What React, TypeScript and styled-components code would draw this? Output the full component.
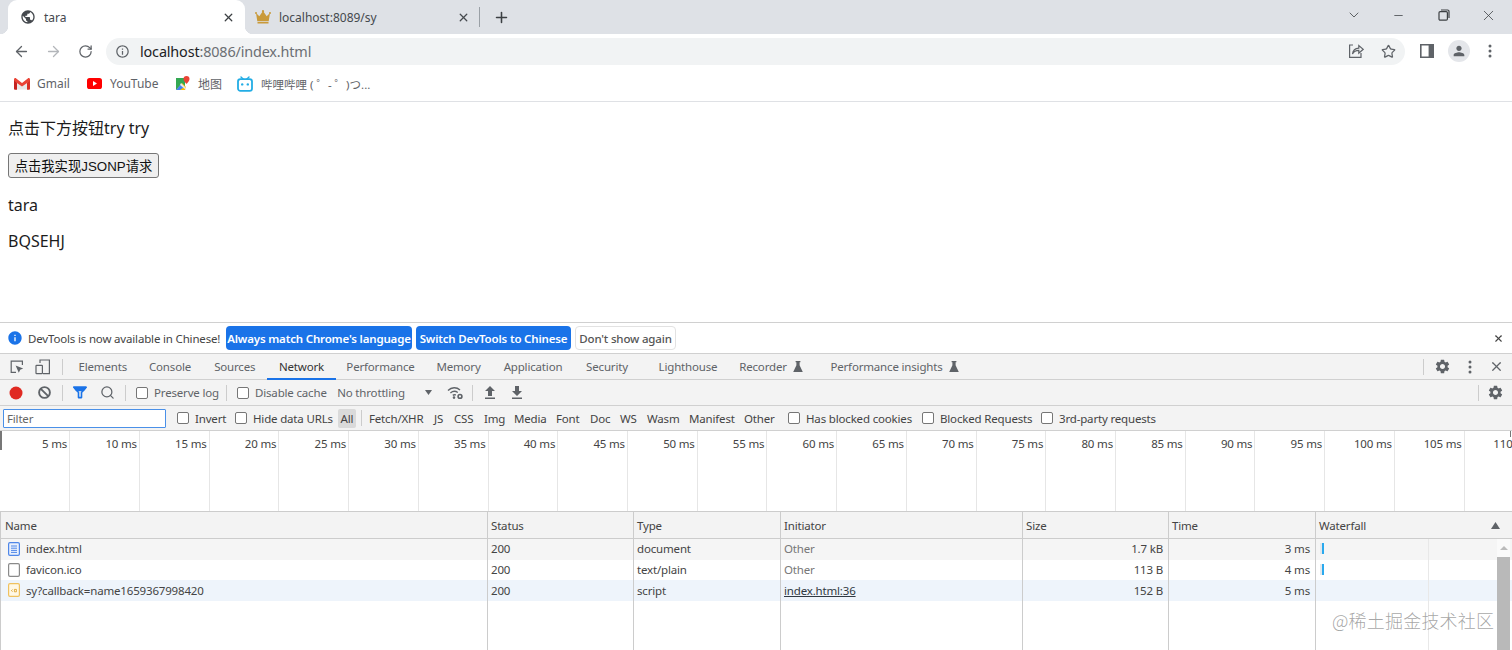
import React from "react";
import styled, { createGlobalStyle } from "styled-components";
import { ArrowLeft, ArrowRight, RotateCw, Star, X, Plus, Minus, ChevronDown, Search } from "lucide-react";
import { MdPublic, MdInfoOutline, MdInfo, MdPerson, MdSettings } from "react-icons/md";

const UI = `"Noto Sans", "Noto Sans CJK SC", sans-serif`;
const Global = createGlobalStyle`
  html, body { margin: 0; padding: 0; background: #fff; }
  #root { width: 1512px; height: 650px; overflow: hidden; }
  * { box-sizing: border-box; }
`;

const Shell = styled.div`
  width: 1512px; height: 650px; display: flex; flex-direction: column; overflow: hidden;
  position: relative; font-family: ${UI}; color: #333;
`;

/* ---------- browser chrome ---------- */
const TabStrip = styled.div`
  height: 34px; flex: none; background: #dee1e6; display: flex; align-items: stretch; padding-left: 8px;
`;
const ActiveTab = styled.div`
  width: 237px; background: #fff; border-radius: 9px 9px 0 0; display: flex; align-items: center;
  padding: 0 10px 0 12px; position: relative; font-size: 12px; color: #45494e;
  &::before, &::after { content: ""; position: absolute; bottom: 0; width: 8px; height: 8px; }
  &::before { left: -8px; background: radial-gradient(circle at 0 0, #dee1e6 8px, #fff 8.5px); }
  &::after { right: -8px; background: radial-gradient(circle at 100% 0, #dee1e6 8px, #fff 8.5px); }
`;
const InactiveTab = styled.div`
  width: 234px; display: flex; align-items: center; padding: 0 9px 0 10px; font-size: 12px; color: #45494e;
`;
const TabTitle = styled.span`
  flex: 1; margin-left: 8px; white-space: nowrap;
`;
const TabDivider = styled.div`
  width: 1px; height: 20px; background: #9aa0a6; align-self: center;
`;
const NewTab = styled.div`
  width: 42px; display: flex; align-items: center; justify-content: center; color: #3c4043;
`;
const WindowControls = styled.div`
  margin-left: auto; display: flex; align-items: center; color: #3c4043; padding: 0 1px 4px 0;
`;
const WinButton = styled.div<{ $w: number }>`
  width: ${(p) => p.$w}px; display: flex; justify-content: center; align-items: center;
`;
const Toolbar = styled.div`
  height: 34px; flex: none; background: #fff; display: flex; align-items: center; padding-left: 5px;
`;
const NavButton = styled.div<{ $c?: string }>`
  width: 32px; height: 32px; display: flex; align-items: center; justify-content: center; color: ${(p) => p.$c || "#5f6368"};
`;
const Omnibox = styled.div`
  margin-left: 5px; width: 1299px; height: 27px; border-radius: 14px; background: #f1f3f4; display: flex; align-items: center;
  padding: 0 1px 0 9px; color: #5f6368;
`;
const Url = styled.div`
  margin-left: 10px; font-size: 14.4px; letter-spacing: -0.15px; color: #6b6f73; white-space: nowrap; flex: 1;
  b { font-weight: 400; color: #202124; }
`;
const OmniAction = styled.div`
  width: 32px; display: flex; justify-content: center; color: #5f6368;
`;
const AvatarBadge = styled.div`
  width: 22px; height: 22px; border-radius: 50%; background: #e4e6ea; display: flex; align-items: center; justify-content: center; color: #5f6368;
`;
const Bookmarks = styled.div`
  height: 34px; flex: none; background: #fff; border-bottom: 1px solid #dfe1e5; display: flex; align-items: center;
  padding: 0 0 2px 14px; font-size: 12px; color: #5f6368;
`;
const Bookmark = styled.div<{ $w: number; $gap?: number; $fs?: number }>`
  width: ${(p) => p.$w}px; display: flex; align-items: center; gap: ${(p) => p.$gap || 8}px; white-space: nowrap; flex: none;
  font-size: ${(p) => p.$fs || 12}px;
`;

/* ---------- page ---------- */
const Page = styled.div`
  height: 220px; flex: none; background: #fff; padding: 15px 8px 0; font-family: ${UI};
  font-size: 16px; color: #1c1c1c;
`;
const Para = styled.p<{ $mt: number }>`
  margin: ${(p) => p.$mt}px 0 0; line-height: 22px; height: 22px;
`;
const PageButton = styled.button`
  display: block; margin: 14px 0 0; height: 25px; width: 151px; padding: 0; border: 1px solid #767676; border-radius: 3px;
  background: #efefef; font: 13.33px "Liberation Sans", "Noto Sans CJK SC", sans-serif; color: #111;
`;

/* ---------- devtools ---------- */
const DevTools = styled.div`
  flex: 1; min-height: 0; display: flex; flex-direction: column; font-size: 11.5px; letter-spacing: -0.17px;
`;
const InfoBar = styled.div`
  height: 32px; flex: none; background: #fff; border-top: 1px solid #d0d0d0; border-bottom: 1px solid #d0d0d0;
  display: flex; align-items: center; padding-left: 7px; color: #444;
`;
const InfoText = styled.span`
  margin-left: 5px; width: 198px; white-space: nowrap;
`;
const BlueButton = styled.div<{ $w: number }>`
  width: ${(p) => p.$w}px; height: 24px; margin-right: 4px; border-radius: 4px; background: #1a73e8; color: #fff;
  font-weight: 600; display: flex; align-items: center; justify-content: center; white-space: nowrap;
`;
const PlainButton = styled.div`
  width: 101px; height: 24px; border-radius: 4px; border: 1px solid #e2e2e2; color: #555;
  font-weight: 500; display: flex; align-items: center; justify-content: center; white-space: nowrap;
`;
const InfoClose = styled.div`
  margin-left: auto; width: 28px; display: flex; justify-content: center; color: #444;
`;
const PanelTabs = styled.div`
  height: 26px; flex: none; background: #f3f3f3; border-bottom: 1px solid #d0d0d0; display: flex; align-items: stretch;
  color: #5f6368;
`;
const Slot = styled.div<{ $w: number; $ml?: number; $c?: string }>`
  width: ${(p) => p.$w}px; margin-left: ${(p) => p.$ml || 0}px; flex: none; display: flex; align-items: center; justify-content: center;
  color: ${(p) => p.$c || "#5f6368"};
`;
const Sep = styled.div<{ $ml?: number; $mr?: number }>`
  width: 1px; height: 16px; background: #ccc; align-self: center; flex: none;
  margin-left: ${(p) => p.$ml || 0}px; margin-right: ${(p) => p.$mr || 0}px;
`;
const PushSep = styled(Sep)`
  margin-left: auto;
`;
const PanelTab = styled.div<{ $w: number; $ml?: number; $active?: boolean }>`
  width: ${(p) => p.$w}px; margin-left: ${(p) => p.$ml || 0}px; flex: none; display: flex; align-items: center; justify-content: center; gap: 6px; white-space: nowrap;
  color: ${(p) => (p.$active ? "#333" : "#5f6368")};
  border-bottom: 2px solid ${(p) => (p.$active ? "#1a73e8" : "transparent")};
  margin-bottom: -1px;
`;
const NetBar = styled.div`
  height: 26px; flex: none; background: #f3f3f3; border-bottom: 1px solid #d0d0d0; display: flex; align-items: center;
  color: #5f6368;
`;
const Throttle = styled.span`
  white-space: nowrap;
`;
const FilterBar = styled.div`
  height: 25px; flex: none; background: #f3f3f3; border-bottom: 1px solid #d0d0d0; display: flex; align-items: center;
  color: #444; padding-left: 3px;
`;
const FilterInput = styled.div`
  width: 163px; height: 19px; background: #fff; border: 1px solid #4a90e8; display: flex; align-items: center; padding-left: 3px;
  color: #666; flex: none; border-radius: 1px;
`;
const CheckRow = styled.label<{ $ml: number; $tw: number }>`
  margin-left: ${(p) => p.$ml}px; flex: none; display: flex; align-items: center; gap: 6px; white-space: nowrap;
  span { width: ${(p) => p.$tw}px; }
`;
const Box = styled.i`
  width: 12px; height: 12px; border: 1px solid #767676; border-radius: 2px; background: #fff; display: block; flex: none;
`;
const AllChip = styled.div`
  margin-left: 5px; width: 18px; height: 19px; background: #dadada; border-radius: 2px; display: flex; align-items: center; justify-content: center; flex: none;
`;
const Chip = styled.div<{ $w: number }>`
  width: ${(p) => p.$w}px; margin-right: 10px; flex: none; white-space: nowrap;
`;
const Timeline = styled.div`
  height: 81px; flex: none; background: #fff; border-bottom: 1px solid #ccc; display: flex; overflow: hidden; position: relative;
  color: #444; padding-left: 0.5px;
  &::before { content: ""; position: absolute; left: 0; top: 0; width: 2px; height: 19px; background: #777; }
  &::after { content: ""; position: absolute; right: 1px; top: 0; width: 1px; height: 6px; background: #777; }
`;
const Tick = styled.div`
  flex: none; width: 69.72px; height: 80px; border-right: 1px solid #e6e6e6; text-align: right; padding: 5px 2px 0 0; white-space: nowrap;
`;
const Table = styled.div`
  flex: 1; display: flex; flex-direction: column; background: #fff; color: #444; min-height: 0; border-left: 1px solid #ccc;
  position: relative;
`;
const COLS = "487px 146px 147px 242px 146px 147px 1fr";
const HeadRow = styled.div`
  height: 27px; flex: none; display: grid; grid-template-columns: ${COLS}; background: #f3f3f3; border-bottom: 1px solid #ccc;
`;
const HeadCell = styled.div`
  display: flex; align-items: center; justify-content: space-between; padding: 0 12px 0 3px; border-right: 1px solid #ccc; white-space: nowrap;
  &:first-child { padding-left: 4px; }
  &:last-child { border-right: none; }
`;
const BodyRow = styled.div<{ $bg: string; $grow?: boolean }>`
  height: 20.7px; flex: ${(p) => (p.$grow ? 1 : "none")}; display: grid; grid-template-columns: ${COLS}; background: ${(p) => p.$bg};
`;
const Cell = styled.div<{ $right?: boolean; $c?: string }>`
  display: flex; align-items: center; padding: 0 5px 1px 3px; border-right: 1px solid #ccc; white-space: nowrap;
  justify-content: ${(p) => (p.$right ? "flex-end" : "flex-start")};
  color: ${(p) => p.$c || "inherit"};
  &:last-child { border-right: none; }
`;
const NameCell = styled(Cell)`
  padding-left: 7px; gap: 6px;
`;
const LinkText = styled.span`
  text-decoration: underline; color: #303942;
`;
const WaterCell = styled.div`
  position: relative; overflow: hidden;
  &::after { content: ""; position: absolute; top: 0; bottom: 0; left: 112px; width: 1px; background: #e8e8e8; }
`;
const Bar = styled.div`
  position: absolute; left: 6px; top: 4px; width: 2px; height: 11px; background: #2aa9ee; box-shadow: -2px 0 0 #e3e8ec;
`;
const Scrollbar = styled.div`
  position: absolute; right: 2px; top: 27px; bottom: 0; width: 13px; background: #fafafa; display: flex; flex-direction: column;
`;
const ScrollArrow = styled.div`
  height: 18px; flex: none; display: flex; justify-content: center; padding-top: 7px;
  &::before { content: ""; width: 0; height: 0; border-left: 4px solid transparent; border-right: 4px solid transparent; border-bottom: 4px solid #bbb; }
`;
const ScrollThumb = styled.div`
  flex: 1; background: #b9b9b9;
`;
const Watermark = styled.div`
  position: absolute; left: 1332px; top: 609px; font-size: 18px; line-height: 22px; letter-spacing: 0.2px; color: rgba(90, 90, 90, 0.55);
  font-family: "Noto Sans CJK SC", sans-serif; white-space: nowrap; font-weight: 300;
`;

/* ---------- icons ---------- */
const Crown = () => (
  <svg width="16" height="14" viewBox="0 0 16 14"><path fill="#c99a3a" d="M1 3l3.3 3.2L8 1l3.7 5.2L15 3l-1.3 8.2H2.3zM2.5 12h11v1.5h-11z" /><circle cx="8" cy="1.2" r="1.1" fill="#c99a3a" /><circle cx="1" cy="3" r="1" fill="#c99a3a" /><circle cx="15" cy="3" r="1" fill="#c99a3a" /></svg>
);
const Share = () => (
  <svg width="16" height="16" viewBox="0 0 16 16" fill="none" stroke="#5f6368" strokeWidth="1.2"><path d="M5 2H1.6v12.4H13V10" /><path d="M4.5 11c.4-3.4 2.6-5.6 6.3-5.8V2.5L15.2 6.3l-4.4 3.8V7.4c-2.8 0-4.9 1-6.3 3.6z" /></svg>
);
const SidePanel = () => (
  <svg width="14" height="14" viewBox="0 0 14 14"><path fill="#5f6368" fillRule="evenodd" d="M0 0h14v14H0zM1.6 1.6v10.8h7V1.6z" /></svg>
);
const Dots = ({ c = "#5f6368" }: { c?: string }) => (
  <svg width="4" height="14" viewBox="0 0 4 14" fill={c}><circle cx="2" cy="2" r="1.5" /><circle cx="2" cy="7" r="1.5" /><circle cx="2" cy="12" r="1.5" /></svg>
);
const Restore = () => (
  <svg width="12" height="12" viewBox="0 0 12 12" fill="none" stroke="#3c4043" strokeWidth="1.2"><rect x="1" y="2.6" width="8.4" height="8.6" rx="1.2" /><path d="M3 1h6.6A1.4 1.4 0 0 1 11 2.4V9" /></svg>
);
const Gmail = () => (
  <svg width="16" height="12" viewBox="0 0 16 12"><path fill="#e8e8e8" d="M3 3l5 4 5-4v8.5H3z" /><path fill="#ea4335" d="M0 1.5C0 .3 1.3-.3 2.2.4L8 5 13.8.4C14.7-.3 16 .3 16 1.5V3L8 8.6 0 3z" /><path fill="#c5221f" d="M0 2.6l3 2.2v7H1a1 1 0 0 1-1-1z" /><path fill="#d93025" d="M16 2.6l-3 2.2v7h2a1 1 0 0 0 1-1z" /></svg>
);
const YouTube = () => (
  <svg width="15" height="11" viewBox="0 0 15 11"><rect width="15" height="11" rx="2.6" fill="#f00" /><path d="M6 3l4 2.5L6 8z" fill="#fff" /></svg>
);
const GMaps = () => (
  <svg width="15" height="15" viewBox="0 0 15 15"><path fill="#34a853" d="M1 2h9v9L1 14z" /><path fill="#fbbc04" d="M1 14l6-7 4 4-1 3z" /><path fill="#4285f4" d="M1 14l5-6 3 3-4 3z" /><path fill="#e8e8e8" d="M6 7l5 5v2l-6-5z" /><path fill="#ea4335" d="M11.5 0a3 3 0 0 1 3 3c0 2-3 5-3 5s-3-3-3-5a3 3 0 0 1 3-3z" /></svg>
);
const Bili = () => (
  <svg width="16" height="16" viewBox="0 0 16 16"><path d="M4 1l2.4 2.2M12 1L9.6 3.2" stroke="#23ade5" strokeWidth="1.4" strokeLinecap="round" /><rect x="1" y="3.2" width="14" height="11.6" rx="2.4" fill="none" stroke="#23ade5" strokeWidth="1.8" /><circle cx="5.2" cy="8.4" r="1.2" fill="#23ade5" /><circle cx="10.8" cy="8.4" r="1.2" fill="#23ade5" /></svg>
);
const Inspect = () => (
  <svg width="14" height="14" viewBox="0 0 14 14" fill="none" stroke="#5f6368" strokeWidth="1.2"><path d="M6 12.4H1.2V1.2h11.2V5" /><path d="M5.6 5.4l7.6 3-3 1.3-1.4 3.1z" fill="#5f6368" stroke="none" /></svg>
);
const Device = () => (
  <svg width="16" height="16" viewBox="0 0 16 16" fill="none" stroke="#5f6368" strokeWidth="1.2"><path d="M5 4V1h9.4v13.6H8" /><rect x="1" y="6.4" width="6.4" height="8.2" rx=".6" /></svg>
);
const Clear = () => (
  <svg width="13" height="13" viewBox="0 0 13 13" fill="none" stroke="#5f6368" strokeWidth="1.9"><circle cx="6.5" cy="6.5" r="5.4" /><path d="M2.8 2.8l7.4 7.4" /></svg>
);
const Funnel = () => (
  <svg width="14" height="13" viewBox="0 0 14 13" fill="none" stroke="#1a73e8" strokeWidth="1.6" strokeLinejoin="round"><path d="M1 1.2h12L8.5 6.6v5H5.5v-5z" /><path d="M1 1.2h12L10.4 4.4H3.6z" fill="#1a73e8" /></svg>
);
const WifiGear = () => (
  <svg width="17" height="14" viewBox="0 0 17 14" fill="none" stroke="#5f6368" strokeWidth="1.4"><path d="M1 4.4C4.6 1 9.6 1 13 4" /><path d="M3.4 7c2.4-2 5.2-2 7.4-.5" /><path d="M5.8 9.4c1-.8 2-.8 3-.4" /><circle cx="7" cy="11.6" r=".6" fill="#5f6368" /><circle cx="13" cy="10.4" r="1.9" strokeWidth="1.6" /></svg>
);
const Arrow = ({ down }: { down?: boolean }) => (
  <svg width="12" height="13" viewBox="0 0 12 13" fill="#5f6368">
    {down ? <path d="M4 0h4v5h3L6 10 1 5h3zM1 11.4h10V13H1z" /> : <path d="M6 0l5 5H8v5H4V5H1zM1 11.4h10V13H1z" />}
  </svg>
);
const Flask = () => (
  <svg width="10" height="11" viewBox="0 0 10 11" fill="#5f6368"><path d="M2.6 0h4.8v1.2H6.6v3L9.8 11H.2l3.2-6.8v-3h-.8z" /></svg>
);
const DocFile = () => (
  <svg width="12" height="14" viewBox="0 0 12 14"><rect x=".6" y=".6" width="10.8" height="12.8" rx="1.4" fill="#eaf1fd" stroke="#4f87e8" strokeWidth="1.2" /><path d="M3 4h6M3 6.2h6M3 8.4h6M3 10.4h6" stroke="#4f87e8" /></svg>
);
const BlankFile = () => (
  <svg width="12" height="14" viewBox="0 0 12 14"><rect x=".6" y=".6" width="10.8" height="12.8" rx="1.4" fill="#fff" stroke="#8a8a8a" strokeWidth="1.2" /></svg>
);
const ScriptFile = () => (
  <svg width="12" height="14" viewBox="0 0 12 14"><rect x=".6" y=".6" width="10.8" height="12.8" rx="1.4" fill="#fff8e6" stroke="#efc15f" strokeWidth="1.2" /><path d="M3.4 7.6l1.2-1M3.4 7.6l1.2 1M6.4 6.4h2v2.4h-2z" stroke="#d99a1c" strokeWidth=".8" fill="none" /></svg>
);

const tabs: [string, number][] = [
  ["Elements", 69.5], ["Console", 65], ["Sources", 64.5], ["Network", 69], ["Performance", 89], ["Memory", 67], ["Application", 82], ["Security", 66],
];
const chips: [string, number][] = [
  ["Fetch/XHR", 55], ["JS", 10], ["CSS", 20], ["Img", 20], ["Media", 32], ["Font", 24], ["Doc", 20], ["WS", 17], ["Wasm", 32], ["Manifest", 45], ["Other", 30],
];
const ticks = Array.from({ length: 22 }, (_, i) => `${(i + 1) * 5} ms`);
const emptyCells = [0, 1, 2, 3, 4, 5];

export default function App() {
  return (
    <Shell>
      <Global />
      <TabStrip>
        <ActiveTab>
          <MdPublic size={16} color="#45494e" />
          <TabTitle>tara</TabTitle>
          <X size={13} strokeWidth={2.4} color="#3c4043" />
        </ActiveTab>
        <InactiveTab>
          <Crown />
          <TabTitle>localhost:8089/sy</TabTitle>
          <X size={13} strokeWidth={2.4} color="#45494e" />
        </InactiveTab>
        <TabDivider />
        <NewTab><Plus size={17} strokeWidth={2.2} /></NewTab>
        <WindowControls>
          <WinButton $w={45}><ChevronDown size={16} strokeWidth={1.2} /></WinButton>
          <WinButton $w={45}><Minus size={13} strokeWidth={1.4} /></WinButton>
          <WinButton $w={45}><Restore /></WinButton>
          <WinButton $w={45}><X size={17} strokeWidth={1.1} /></WinButton>
        </WindowControls>
      </TabStrip>
      <Toolbar>
        <NavButton><ArrowLeft size={17} strokeWidth={1.8} /></NavButton>
        <NavButton $c="#b3b6ba"><ArrowRight size={17} strokeWidth={1.8} /></NavButton>
        <NavButton><RotateCw size={15} strokeWidth={2} /></NavButton>
        <Omnibox>
          <MdInfoOutline size={15} />
          <Url><b>localhost</b>:8086/index.html</Url>
          <OmniAction><Share /></OmniAction>
          <OmniAction><Star size={15} strokeWidth={2} /></OmniAction>
        </Omnibox>
        <Slot $w={32} $ml={6}><SidePanel /></Slot>
        <Slot $w={32}><AvatarBadge><MdPerson size={16} /></AvatarBadge></Slot>
        <Slot $w={30}><Dots /></Slot>
      </Toolbar>
      <Bookmarks>
        <Bookmark $w={73} $gap={7}><Gmail /><span>Gmail</span></Bookmark>
        <Bookmark $w={88}><YouTube /><span>YouTube</span></Bookmark>
        <Bookmark $w={62}><GMaps /><span>地图</span></Bookmark>
        <Bookmark $w={140} $fs={11.5}><Bili /><span>哔哩哔哩 ( ゜- ゜)つ...</span></Bookmark>
      </Bookmarks>

      <Page>
        <Para $mt={0}>点击下方按钮try try</Para>
        <PageButton>点击我实现JSONP请求</PageButton>
        <Para $mt={16}>tara</Para>
        <Para $mt={14}>BQSEHJ</Para>
      </Page>

      <DevTools>
        <InfoBar>
          <MdInfo size={16} color="#1a73e8" />
          <InfoText>DevTools is now available in Chinese!</InfoText>
          <BlueButton $w={186}>Always match Chrome's language</BlueButton>
          <BlueButton $w={155}>Switch DevTools to Chinese</BlueButton>
          <PlainButton>Don't show again</PlainButton>
          <InfoClose><X size={11} strokeWidth={2.4} /></InfoClose>
        </InfoBar>
        <PanelTabs>
          <Slot $w={20} $ml={7}><Inspect /></Slot>
          <Slot $w={24} $ml={4}><Device /></Slot>
          <Sep $ml={7} $mr={5} />
          {tabs.map(([t, w]) => (
            <PanelTab key={t} $w={w} $active={t === "Network"}>{t}</PanelTab>
          ))}
          <PanelTab $w={81} $ml={7.5}>Lighthouse</PanelTab>
          <PanelTab $w={85}>Recorder<Flask /></PanelTab>
          <PanelTab $w={162}>Performance insights<Flask /></PanelTab>
          <PushSep />
          <Slot $w={36}><MdSettings size={17} /></Slot>
          <Slot $w={20}><Dots /></Slot>
          <Slot $w={32}><X size={15} strokeWidth={2} /></Slot>
        </PanelTabs>
        <NetBar>
          <Slot $w={32}><svg width="14" height="14" viewBox="0 0 14 14"><circle cx="7" cy="7" r="6.5" fill="#e02a22" /></svg></Slot>
          <Slot $w={24}><Clear /></Slot>
          <Sep $ml={6} />
          <Slot $w={24} $ml={5}><Funnel /></Slot>
          <Slot $w={24} $ml={3}><Search size={15} strokeWidth={2} /></Slot>
          <Sep $ml={6} />
          <CheckRow $ml={10} $tw={63}><Box /><span>Preserve log</span></CheckRow>
          <Sep $ml={9} />
          <CheckRow $ml={10} $tw={71}><Box /><span>Disable cache</span></CheckRow>
          <Slot $w={72} $ml={9}><Throttle>No throttling</Throttle></Slot>
          <Slot $w={12} $ml={15}><svg width="7" height="5" viewBox="0 0 7 5"><path d="M0 0h7L3.5 5z" fill="#5f6368" /></svg></Slot>
          <Slot $w={20} $ml={11}><WifiGear /></Slot>
          <Sep $ml={7} />
          <Slot $w={24} $ml={5}><Arrow /></Slot>
          <Slot $w={24} $ml={3}><Arrow down /></Slot>
          <PushSep />
          <Slot $w={33}><MdSettings size={17} /></Slot>
        </NetBar>
        <FilterBar>
          <FilterInput>Filter</FilterInput>
          <CheckRow $ml={11} $tw={30}><Box /><span>Invert</span></CheckRow>
          <CheckRow $ml={10} $tw={80}><Box /><span>Hide data URLs</span></CheckRow>
          <AllChip>All</AllChip>
          <Sep $ml={5} $mr={7} />
          {chips.map(([c, w]) => <Chip key={c} $w={w}>{c}</Chip>)}
          <CheckRow $ml={4} $tw={107}><Box /><span>Has blocked cookies</span></CheckRow>
          <CheckRow $ml={9} $tw={91}><Box /><span>Blocked Requests</span></CheckRow>
          <CheckRow $ml={10} $tw={96}><Box /><span>3rd-party requests</span></CheckRow>
        </FilterBar>
        <Timeline>
          {ticks.map((t) => <Tick key={t}>{t}</Tick>)}
        </Timeline>
        <Table>
          <HeadRow>
            <HeadCell>Name</HeadCell>
            <HeadCell>Status</HeadCell>
            <HeadCell>Type</HeadCell>
            <HeadCell>Initiator</HeadCell>
            <HeadCell>Size</HeadCell>
            <HeadCell>Time</HeadCell>
            <HeadCell>Waterfall<svg width="9" height="7" viewBox="0 0 9 7"><path d="M4.5 0L9 7H0z" fill="#5f6368" /></svg></HeadCell>
          </HeadRow>
          <BodyRow $bg="#f5f5f5">
            <NameCell><DocFile />index.html</NameCell>
            <Cell>200</Cell><Cell>document</Cell><Cell $c="#777">Other</Cell><Cell $right>1.7 kB</Cell><Cell $right>3 ms</Cell>
            <WaterCell><Bar /></WaterCell>
          </BodyRow>
          <BodyRow $bg="#ffffff">
            <NameCell><BlankFile />favicon.ico</NameCell>
            <Cell>200</Cell><Cell>text/plain</Cell><Cell $c="#777">Other</Cell><Cell $right>113 B</Cell><Cell $right>4 ms</Cell>
            <WaterCell><Bar /></WaterCell>
          </BodyRow>
          <BodyRow $bg="#eef4fb">
            <NameCell><ScriptFile />sy?callback=name1659367998420</NameCell>
            <Cell>200</Cell><Cell>script</Cell><Cell><LinkText>index.html:36</LinkText></Cell><Cell $right>152 B</Cell><Cell $right>5 ms</Cell>
            <WaterCell />
          </BodyRow>
          <BodyRow $bg="#ffffff" $grow>
            {emptyCells.map((i) => <Cell key={i} />)}
            <WaterCell />
          </BodyRow>
          <Scrollbar><ScrollArrow /><ScrollThumb /></Scrollbar>
        </Table>
      </DevTools>
      <Watermark>@稀土掘金技术社区</Watermark>
    </Shell>
  );
}
